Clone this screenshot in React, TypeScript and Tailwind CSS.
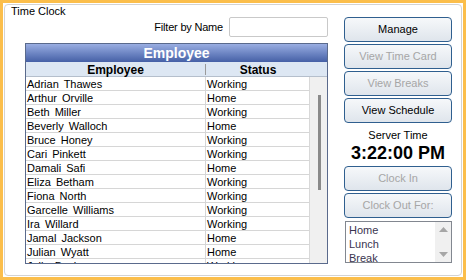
import React from 'react'

type Row = { name: string; status: string }

const rows: Row[] = [
  { name: 'Adrian Thawes', status: 'Working' },
  { name: 'Arthur Orville', status: 'Home' },
  { name: 'Beth Miller', status: 'Working' },
  { name: 'Beverly Walloch', status: 'Home' },
  { name: 'Bruce Honey', status: 'Working' },
  { name: 'Cari Pinkett', status: 'Working' },
  { name: 'Damali Safi', status: 'Home' },
  { name: 'Eliza Betham', status: 'Working' },
  { name: 'Fiona North', status: 'Working' },
  { name: 'Garcelle Williams', status: 'Working' },
  { name: 'Ira Willard', status: 'Working' },
  { name: 'Jamal Jackson', status: 'Home' },
  { name: 'Julian Wyatt', status: 'Home' },
  { name: 'Julia Becker', status: 'Working' },
]

const reasons = ['Home', 'Lunch', 'Break']

function Button({ label, disabled }: { label: string; disabled?: boolean }) {
  return (
    <button
      type="button"
      className={
        'flex h-[25px] w-full items-center justify-center rounded-[4px] border border-[#2f5f8f] bg-gradient-to-b from-[#f6f8fa] to-[#dfe5ec] text-[11px] leading-none ' +
        (disabled ? 'text-[#a6a6a6]' : 'text-black')
      }
    >
      {label}
    </button>
  )
}

export default function App() {
  return (
    <div className="h-[280px] w-[466px] bg-[#fbbe4b] p-[3px] font-['Liberation_Sans',Arial,sans-serif] text-black">
      <div className="h-full w-full bg-white p-[1px]">
        <div className="flex h-full flex-col rounded-[4px] border border-[#d3d3d3]">
          <div className="ml-[6px] h-[12px] text-[11px] leading-[13px]">Time Clock</div>

          <div className="flex flex-1 pl-[20px]">
            {/* grid side */}
            <div className="flex w-[303px] flex-col">
              <div className="flex h-[20px] items-center justify-end gap-[6px]">
                <span className="text-[11px] tracking-[-0.2px]">Filter by Name</span>
                <div className="h-[20px] w-[99px] rounded-[2px] border border-[#c9c9c9] bg-white" />
              </div>

              <div className="mt-[6px] flex h-[221px] flex-col overflow-hidden border border-[#5a6a8c]">
                <div className="flex h-[18px] shrink-0 items-center justify-center bg-gradient-to-b from-[#9aaee2] to-[#4660a6] text-[14px] font-bold text-white">
                  Employee
                </div>
                <div className="flex h-[15px] shrink-0 items-center border-b border-[#b5bfcc] bg-[#dde7f3] pt-[1px] text-[12px] font-bold">
                  <div className="w-[179px] text-center">Employee</div>
                  <div className="h-[11px] w-px bg-[#9a9a9a]" />
                  <div className="w-[104px] text-center">Status</div>
                </div>
                <div className="flex flex-1 overflow-hidden">
                  <div className="w-[284px] border-r border-[#d8d8d8]">
                    {rows.map((r) => (
                      <div
                        key={r.name}
                        className="flex h-[14px] border-b border-[#d6d6d6] text-[11px] leading-[13px]"
                      >
                        <div className="w-[180px] border-r border-[#d6d6d6] pl-[1px] pt-[1px] [word-spacing:2px]">
                          {r.name}
                        </div>
                        <div className="pl-[1px] pt-[1px]">{r.status}</div>
                      </div>
                    ))}
                  </div>
                  <div className="flex w-[17px] justify-center bg-[#f0f0f0] pl-[1px]">
                    <div className="mt-[18px] h-[95px] w-[3px] bg-[#8a8a8a]" />
                  </div>
                </div>
              </div>
            </div>

            {/* buttons side */}
            <div className="ml-[16px] flex w-[108px] flex-col">
              <div className="flex flex-col gap-[2px]">
                <Button label="Manage" />
                <Button label="View Time Card" disabled />
                <Button label="View Breaks" disabled />
                <Button label="View Schedule" />
              </div>
              <div className="mt-[6px] text-center text-[11px] leading-[13px]">Server Time</div>
              <div className="mt-[1px] text-center text-[18px] font-bold leading-[20px]">3:22:00 PM</div>
              <div className="mt-[3px] flex flex-col gap-[2px]">
                <Button label="Clock In" disabled />
                <Button label="Clock Out For:" disabled />
              </div>
              <div className="ml-[1px] mt-[3px] flex h-[42px] border border-[#828790] bg-white">
                <div className="flex-1 pl-[3px] pt-[1px] text-[11px] leading-[14px] text-[#3a3550]">
                  {reasons.map((r) => (
                    <div key={r}>{r}</div>
                  ))}
                </div>
                <div className="flex w-[16px] flex-col items-center justify-between bg-[#f0f0f0] py-[5px]">
                  <svg width="9" height="5" viewBox="0 0 9 5">
                    <path d="M0 5 L4.5 0 L9 5 Z" fill="#a6a6a6" />
                  </svg>
                  <svg width="9" height="5" viewBox="0 0 9 5">
                    <path d="M0 0 L4.5 5 L9 0 Z" fill="#a6a6a6" />
                  </svg>
                </div>
              </div>
            </div>
          </div>
        </div>
      </div>
    </div>
  )
}
